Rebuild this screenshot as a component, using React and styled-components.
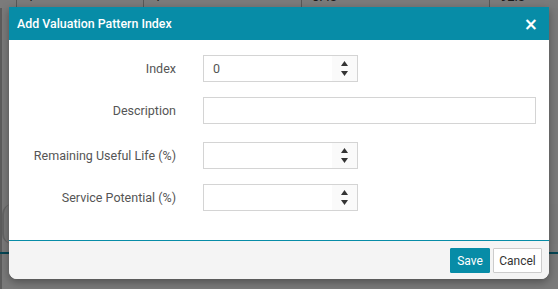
import React from "react";
import styled, { createGlobalStyle } from "styled-components";

const Global = createGlobalStyle`
  html, body { margin: 0; padding: 0; }
  body {
    width: 558px;
    height: 289px;
    overflow: hidden;
    font-family: Roboto, "Liberation Sans", Arial, sans-serif;
    background: #f4f4f4;
  }
  * { box-sizing: border-box; }
`;

const Page = styled.div`
  width: 558px;
  height: 289px;
  position: relative;
  overflow: hidden;
  box-shadow: inset 2px 0 0 #b8b8b8;
`;

const BgTable = styled.div`
  display: grid;
  grid-template-columns: 16px 127px 158px 188px 1fr;
  margin-top: -10px;
  height: 18px;
  background: #f7f7f7;
`;

const BgCell = styled.div`
  border-left: ${(p) => (p.first ? "none" : "1px solid #b0b0b0")};
  padding-left: 10px;
  font-size: 13px;
  color: #333;
  line-height: 14px;
`;

const BgPanel = styled.div`
  margin: 196px 0 0 2px;
  height: 40px;
  border-radius: 10px 0 0 10px;
  border-left: 2px solid #c8c8c8;
  background: #f2f2f2;
`;

const BgLine = styled.div`
  margin-top: 8px;
  height: 2px;
  background: #0b8ba6;
`;

const Overlay = styled.div`
  position: absolute;
  inset: 0;
  background: rgba(0, 0, 0, 0.5);
`;

const Dialog = styled.div`
  position: absolute;
  left: 9px;
  top: 7px;
  width: 540px;
  background: #fff;
  border-radius: 0 0 8px 8px;
  box-shadow: 0 3px 9px rgba(0, 0, 0, 0.35);
  display: flex;
  flex-direction: column;
`;

const Header = styled.div`
  height: 33px;
  background: #078ca7;
  display: flex;
  align-items: center;
  justify-content: space-between;
  padding: 0 11px 0 8px;
`;

const Title = styled.h4`
  margin: 0;
  color: #fff;
  font-size: 12.4px;
  font-weight: 500;
`;

const Close = styled.span`
  color: #fff;
  font-size: 17px;
  font-weight: 700;
  line-height: 1;
  font-family: "DejaVu Sans", Arial, sans-serif;
  margin-top: 2px;
`;

const Body = styled.div`
  height: 200px;
  padding: 15px 13px 0 0;
  display: flex;
  flex-direction: column;
`;

const Row = styled.div`
  display: grid;
  grid-template-columns: 167px 1fr;
  column-gap: 27px;
  align-items: center;
  margin-top: ${(p) => p.mt || 0}px;
`;

const Label = styled.label`
  text-align: right;
  font-size: 12.5px;
  color: #555;
`;

const TextInput = styled.div`
  height: 27px;
  border: 1px solid #d4d4d4;
  background: #fff;
  width: ${(p) => (p.narrow ? "155px" : "100%")};
  display: flex;
  align-items: center;
  font-size: 12.5px;
  color: #555;
  padding-left: 9px;
`;

const Value = styled.span`
  flex: 1;
`;

const Spinner = styled.div`
  width: 25px;
  height: 100%;
  background: #fafafa;
  display: flex;
  flex-direction: column;
  align-items: center;
  justify-content: center;
  gap: 5px;
`;

const Arrow = ({ down }) => (
  <svg width="7" height="5" viewBox="0 0 7 5" style={{ display: "block" }}>
    {down ? <path d="M0 0H7L3.5 5Z" fill="#333" /> : <path d="M0 5H7L3.5 0Z" fill="#333" />}
  </svg>
);

const Footer = styled.div`
  height: 39px;
  border-top: 1px solid #078ca7;
  background: #f4f4f4;
  border-radius: 0 0 8px 8px;
  display: flex;
  justify-content: flex-end;
  align-items: flex-start;
  gap: 3px;
  padding: 7px 7px 0 0;
`;

const Button = styled.button`
  height: 25px;
  padding: 0;
  font-family: Roboto, "Liberation Sans", Arial, sans-serif;
  font-size: 12px;
  border-radius: 1px;
  cursor: pointer;
  background: ${(p) => (p.primary ? "#078ca7" : "#fff")};
  color: ${(p) => (p.primary ? "#fff" : "#333")};
  border: 1px solid ${(p) => (p.primary ? "#078ca7" : "#ccc")};
  width: ${(p) => (p.primary ? "40px" : "49px")};
`;

const NumberField = ({ value }) => (
  <TextInput narrow>
    <Value>{value}</Value>
    <Spinner>
      <Arrow />
      <Arrow down />
    </Spinner>
  </TextInput>
);

export default function App() {
  return (
    <Page>
      <Global />
      <BgTable>
        <BgCell first />
        <BgCell>1</BgCell>
        <BgCell>1</BgCell>
        <BgCell>0.43</BgCell>
        <BgCell>92.3</BgCell>
      </BgTable>
      <BgPanel />
      <BgLine />
      <Overlay />
      <Dialog>
        <Header>
          <Title>Add Valuation Pattern Index</Title>
          <Close>×</Close>
        </Header>
        <Body>
          <Row>
            <Label>Index</Label>
            <NumberField value="0" />
          </Row>
          <Row mt={15}>
            <Label>Description</Label>
            <TextInput />
          </Row>
          <Row mt={18}>
            <Label>Remaining Useful Life (%)</Label>
            <NumberField value="" />
          </Row>
          <Row mt={15}>
            <Label>Service Potential (%)</Label>
            <NumberField value="" />
          </Row>
        </Body>
        <Footer>
          <Button primary>Save</Button>
          <Button>Cancel</Button>
        </Footer>
      </Dialog>
    </Page>
  );
}
